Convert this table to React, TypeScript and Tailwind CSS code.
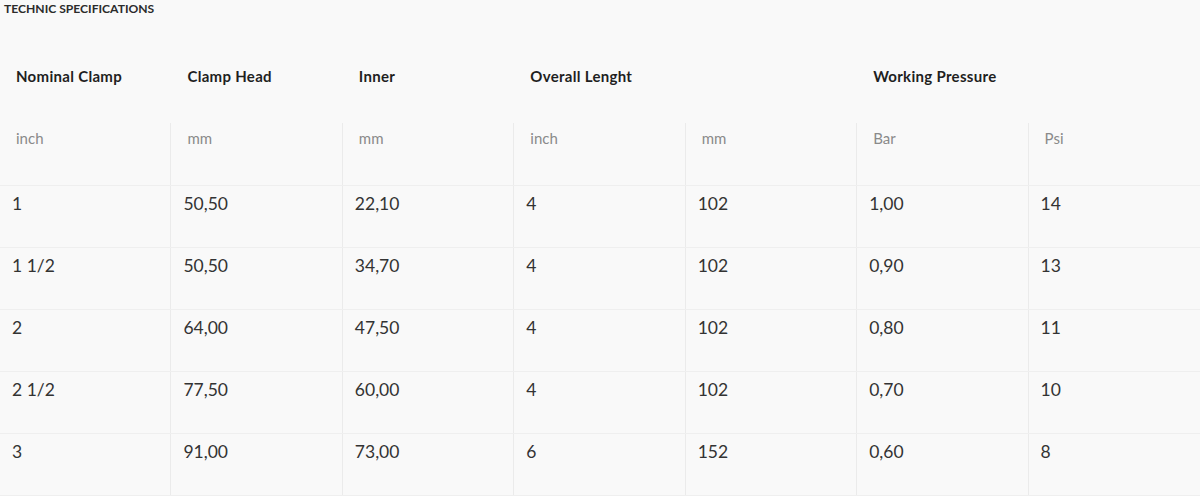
import React from 'react';

const UNITS = ['inch', 'mm', 'mm', 'inch', 'mm', 'Bar', 'Psi'];

const ROWS: string[][] = [
  ['1', '50,50', '22,10', '4', '102', '1,00', '14'],
  ['1 1/2', '50,50', '34,70', '4', '102', '0,90', '13'],
  ['2', '64,00', '47,50', '4', '102', '0,80', '11'],
  ['2 1/2', '77,50', '60,00', '4', '102', '0,70', '10'],
  ['3', '91,00', '73,00', '6', '152', '0,60', '8'],
];

export default function App() {
  return (
    <div className="w-[1200px] h-[496px] overflow-hidden bg-[#f9f9f9] text-[#333]" style={{ fontFamily: 'Lato, "Open Sans", sans-serif' }}>
      {/* Title */}
      <div className="h-[16px] pl-[4px] pt-[1px] text-[12.1px] leading-[16px] font-bold text-[#2b2b2b]">
        TECHNIC SPECIFICATIONS
      </div>

      {/* Column titles */}
      <div className="grid grid-cols-7 h-[107px] pt-[50px] text-[15px] leading-[20px] font-bold tracking-[0.3px] text-[#1f1f1f]">
        <div className="pl-[16px]">Nominal Clamp</div>
        <div className="pl-[16px]">Clamp Head</div>
        <div className="pl-[16px]">Inner</div>
        <div className="col-span-2 pl-[16px]">Overall Lenght</div>
        <div className="col-span-2 pl-[16px]">Working Pressure</div>
      </div>

      {/* Units */}
      <div className="grid grid-cols-7 h-[63px] border-b border-[#efefef]">
        {UNITS.map((u, i) => (
          <div
            key={i}
            className={`pl-[16px] pt-[5px] text-[15px] leading-[20px] text-[#8a8a8a] ${i < 6 ? 'border-r border-[#ebebeb]' : ''}`}
          >
            {u}
          </div>
        ))}
      </div>

      {/* Data */}
      {ROWS.map((row, r) => (
        <div key={r} className="grid grid-cols-7 h-[62px] border-b border-[#efefef]">
          {row.map((v, i) => (
            <div
              key={i}
              className={`pl-[12px] pt-[6px] text-[17.5px] leading-[24px] text-[#333] ${i < 6 ? 'border-r border-[#ebebeb]' : ''}`}
            >
              {v}
            </div>
          ))}
        </div>
      ))}
    </div>
  );
}
